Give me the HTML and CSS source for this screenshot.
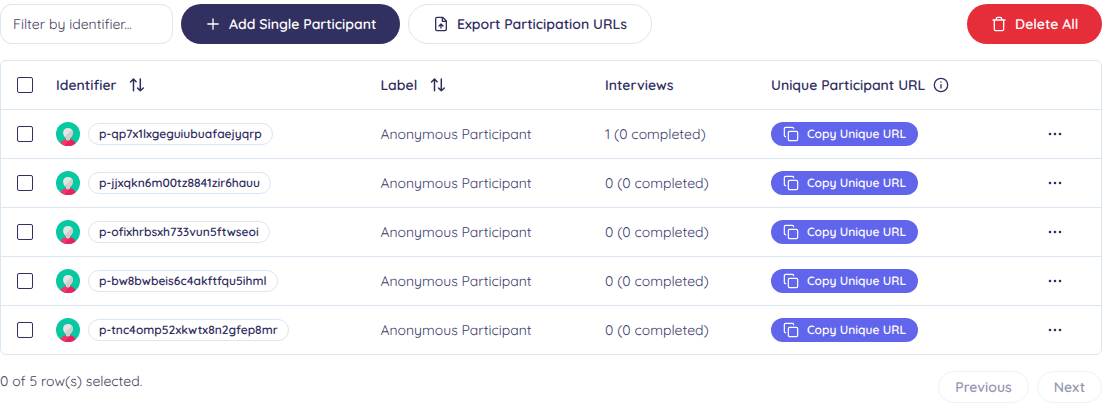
FILE: index.html
```html
<!DOCTYPE html>
<html lang="en">
<head>
<meta charset="utf-8">
<title>Participants</title>
<link rel="stylesheet" href="styles.css">
</head>
<body>
<svg class="defs" width="0" height="0" aria-hidden="true">
  <symbol id="sort" viewBox="0 0 16 16"><path d="M1.500 5 4.500 2l2.600 2.800M4.500 2v11.800M8.500 11l2.800 2.800 3-2.800M11.300 13.800V2"/></symbol>
  <symbol id="copy" viewBox="0 0 24 24"><rect x="8" y="8" width="14" height="14" rx="2"/><path d="M4 16c-1.100 0-2-.9-2-2V4c0-1.100.9-2 2-2h10c1.100 0 2 .9 2 2"/></symbol>
  <symbol id="dots" viewBox="0 0 16 16"><circle cx="3" cy="8" r="1.300"/><circle cx="8" cy="8" r="1.300"/><circle cx="13" cy="8" r="1.300"/></symbol>
  <symbol id="avatar" viewBox="0 0 24 24"><circle cx="12" cy="12" r="12" fill="#06c8a1"/><path d="M4.500 21.400C5.500 18.800 8.300 17 12 17s6.500 1.800 7.500 4.400A12 12 0 0 1 4.500 21.400Z" fill="#f5336d"/><path d="M8.500 23.500 14 17.200c2.700.5 4.700 2 5.500 4.200A12 12 0 0 1 8.500 23.500Z" fill="#e6255f"/><path d="M12 6c3 0 4.900 2 4.900 4.800 0 2-1.200 4-2.900 5.200v1.300c0 1.400-4 1.400-4 0V16c-1.700-1.200-2.900-3.200-2.900-5.200C7.100 8 9 6 12 6Z" fill="#e5e5e5"/><path d="M16 7.800c1.800 2.600.9 6.300-2 8.200v1.300c0 1.400-4 1.400-4 0V16l-1.400-1.200Z" fill="#cfcfcf"/></symbol>
</svg>
<main class="page">
  <div class="toolbar">
    <div class="filter"><span>Filter by identifier...</span></div>
    <button class="btn primary"><svg class="icon i16" viewBox="0 0 16 16"><path d="M8 2.800v10.400M2.800 8h10.400"/></svg><span>Add Single Participant</span></button>
    <button class="btn outline"><svg class="icon i16" viewBox="0 0 24 24"><path class="w2" d="M14.500 2H6a2 2 0 0 0-2 2v16a2 2 0 0 0 2 2h12a2 2 0 0 0 2-2V7.500L14.500 2ZM14 2v6h6M12 12v6M15 15l-3-3-3 3"/></svg><span>Export Participation URLs</span></button>
    <button class="btn danger"><svg class="icon i16" viewBox="0 0 24 24"><path class="w2" d="M3 6h18M19 6v14a2 2 0 0 1-2 2H7a2 2 0 0 1-2-2V6M8 6V4a2 2 0 0 1 2-2h4a2 2 0 0 1 2 2v2"/></svg><span>Delete All</span></button>
  </div>
  <div class="table">
    <div class="row head">
      <span class="check"></span>
      <div class="cell"><span>Identifier</span><svg class="icon i16 sort"><use href="#sort"/></svg></div>
      <div class="cell"><span>Label</span><svg class="icon i16 sort"><use href="#sort"/></svg></div>
      <div class="cell"><span>Interviews</span></div>
      <div class="cell"><span>Unique Participant URL</span><svg class="icon i16 info" viewBox="0 0 16 16"><circle cx="8" cy="8" r="6.700"/><path d="M8 7.600v3.400M8 5v.2"/></svg></div>
    </div>
    <div class="row">
      <span class="check"></span>
      <div class="cell"><svg class="avatar"><use href="#avatar"/></svg><span class="badge">p-qp7x1lxgeguiubuafaejyqrp</span></div>
      <span class="label">Anonymous Participant</span><span class="count">1 (0 completed)</span>
      <button class="copy"><svg class="icon i16"><use href="#copy"/></svg><span>Copy Unique URL</span></button>
      <svg class="dots"><use href="#dots"/></svg>
    </div>
    <div class="row">
      <span class="check"></span>
      <div class="cell"><svg class="avatar"><use href="#avatar"/></svg><span class="badge">p-jjxqkn6m00tz8841zir6hauu</span></div>
      <span class="label">Anonymous Participant</span><span class="count">0 (0 completed)</span>
      <button class="copy"><svg class="icon i16"><use href="#copy"/></svg><span>Copy Unique URL</span></button>
      <svg class="dots"><use href="#dots"/></svg>
    </div>
    <div class="row">
      <span class="check"></span>
      <div class="cell"><svg class="avatar"><use href="#avatar"/></svg><span class="badge">p-ofixhrbsxh733vun5ftwseoi</span></div>
      <span class="label">Anonymous Participant</span><span class="count">0 (0 completed)</span>
      <button class="copy"><svg class="icon i16"><use href="#copy"/></svg><span>Copy Unique URL</span></button>
      <svg class="dots"><use href="#dots"/></svg>
    </div>
    <div class="row">
      <span class="check"></span>
      <div class="cell"><svg class="avatar"><use href="#avatar"/></svg><span class="badge">p-bw8bwbeis6c4akftfqu5ihml</span></div>
      <span class="label">Anonymous Participant</span><span class="count">0 (0 completed)</span>
      <button class="copy"><svg class="icon i16"><use href="#copy"/></svg><span>Copy Unique URL</span></button>
      <svg class="dots"><use href="#dots"/></svg>
    </div>
    <div class="row">
      <span class="check"></span>
      <div class="cell"><svg class="avatar"><use href="#avatar"/></svg><span class="badge">p-tnc4omp52xkwtx8n2gfep8mr</span></div>
      <span class="label">Anonymous Participant</span><span class="count">0 (0 completed)</span>
      <button class="copy"><svg class="icon i16"><use href="#copy"/></svg><span>Copy Unique URL</span></button>
      <svg class="dots"><use href="#dots"/></svg>
    </div>
  </div>
  <div class="footer">
    <span class="selected">0 of 5 row(s) selected.</span>
    <button class="pager prev">Previous</button>
    <button class="pager next">Next</button>
  </div>
</main>
</body>
</html>
```
FILE: styles.css
```css
* { box-sizing: border-box; }
body { margin: 0; background: #fff; color: #2f2e5f; font: 400 14px/20px Quicksand, Lato, sans-serif; text-rendering: geometricPrecision; overflow: hidden; }
button { font: inherit; color: inherit; background: none; border: 0; padding: 0; text-rendering: inherit; }
span { white-space: nowrap; }
.defs { position: absolute; }
.page { width: 1102px; height: 419px; padding-top: 4px; }
.icon { fill: none; stroke: currentColor; stroke-width: 1.3; stroke-linecap: round; stroke-linejoin: round; flex: none; }
.icon .w2 { stroke-width: 2; }
.i16 { width: 16px; height: 16px; }
.toolbar { display: flex; gap: 8px; height: 40px; }
.filter { width: 173px; border: 1px solid #dae6f1; border-radius: 12px; padding: 9px 12px; color: #3f3e5c; }
.btn { display: flex; align-items: center; border-radius: 20px; height: 40px; padding-left: 24px; gap: 8px; font-weight: 600; font-size: 14px; }
.primary { width: 219px; background: #322f61; color: #fff; }
.outline { width: 244px; border: 1px solid #dae6f1; }
.danger { width: 135px; margin-left: auto; background: #e52e3a; color: #fff; }
.table { margin-top: 16px; border: 1px solid #dae6f1; border-radius: 6px; height: 295px; }
.row { display: grid; grid-template-columns: 39px 324.4px 224.6px 166px 276px 16px; align-items: center; padding-left: 16px; height: 49px; border-bottom: 1px solid #dae6f1; }
.row:last-child { border-bottom: 0; height: 48px; }
.check { width: 16px; height: 16px; border: 1px solid #322f61; border-radius: 2px; }
.cell { display: flex; align-items: center; }
.head { font-weight: 600; }
.sort { margin-left: 12.5px; stroke-width: 1.5; }
.info { margin-left: 8px; }
.avatar { width: 24px; height: 24px; flex: none; }
.badge { margin-left: 8px; height: 22px; border: 1px solid #dae6f1; border-radius: 11px; padding: 0 10px; font-size: 12px; font-weight: 600; }
.label, .count { color: #3d3b6b; }
.copy { display: flex; align-items: center; width: 147px; height: 24px; border-radius: 12px; background: #6065eb; color: #fff; font-size: 12px; font-weight: 600; padding-left: 12px; gap: 8px; }
.copy .icon { stroke-width: 1.8; }
.dots { width: 16px; height: 16px; fill: #2f2e5f; }
.footer { display: flex; gap: 8px; margin-top: 16px; }
.selected { margin-right: auto; color: #3f3e5c; }
.pager { height: 32px; border: 1px solid #edf3f8; border-radius: 16px; color: #9795b0; font-weight: 600; }
.prev { width: 91px; }
.next { width: 65px; }
```
